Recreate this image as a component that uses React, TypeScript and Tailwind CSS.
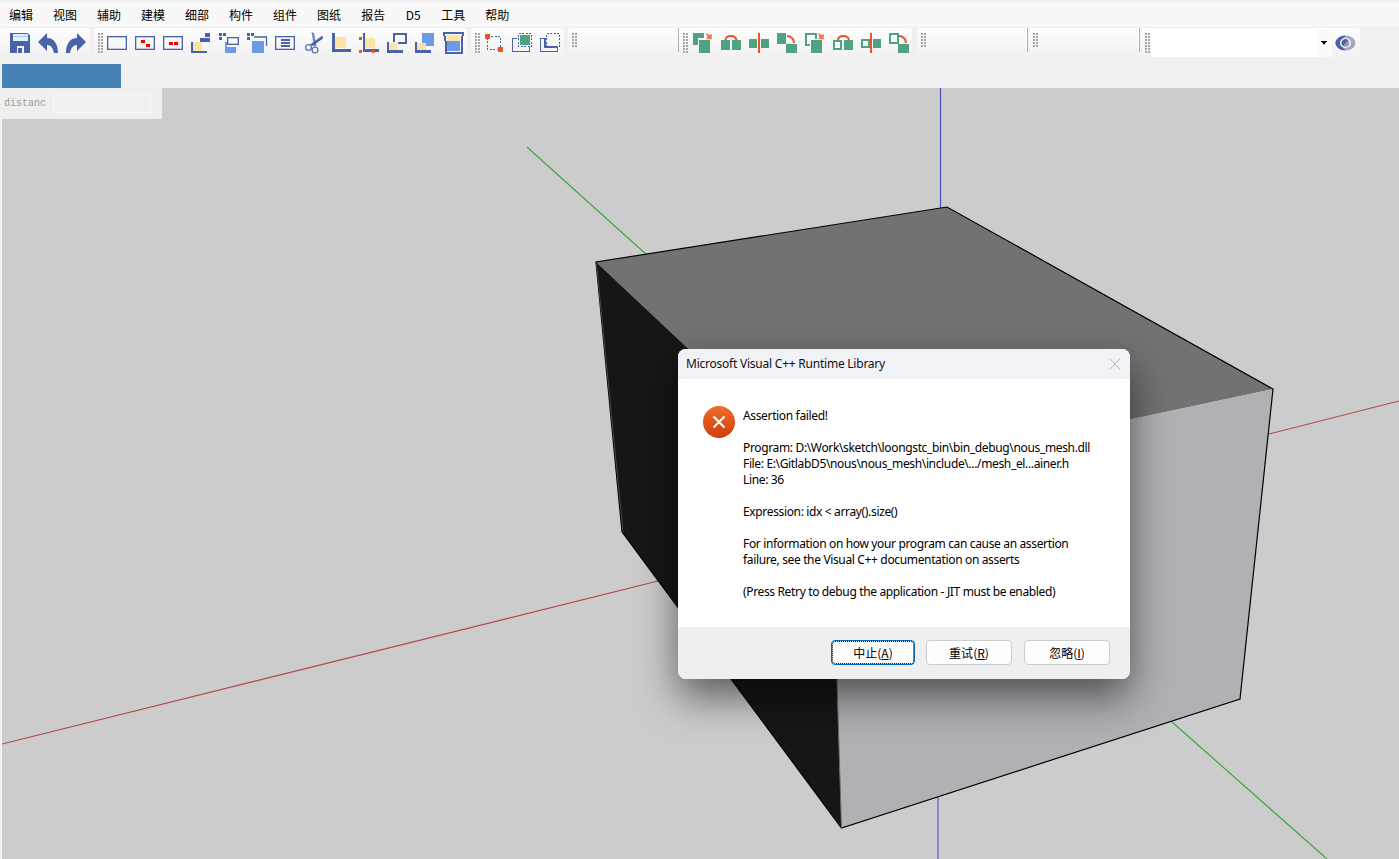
import React from "react";

const B = "#4a63a8";
const Y = "#fbe3a3";
const L = "#6a9ae8";
const R = "#f00000";
const O = "#e8552c";
const G = "#4fa383";

function Ico({ x, children }: { x: number; children?: React.ReactNode }) {
  return (
    <div className="flex h-[30px] w-[28px] shrink-0 items-center justify-center">
      <svg width="24" height="24" viewBox={`${x} 31 24 24`} shapeRendering="crispEdges">
        {children}
      </svg>
    </div>
  );
}

function Handle({ tall = true }: { tall?: boolean }) {
  const cls = tall
    ? "h-[20px] w-[2px] bg-[repeating-linear-gradient(to_bottom,#a6a6a6_0_2px,transparent_2px_3px)]"
    : "h-[14px] w-[2px] bg-[repeating-linear-gradient(to_bottom,#a6a6a6_0_2px,transparent_2px_3px)]";
  return (
    <div className="flex w-full gap-px pt-[5px]">
      <div className={cls} />
      <div className={cls} />
    </div>
  );
}

function Group({
  w,
  tall = true,
  handle = true,
  hw = 9,
  children,
  line = false,
}: {
  w: number;
  tall?: boolean;
  handle?: boolean;
  hw?: number;
  line?: boolean;
  children?: React.ReactNode;
}) {
  return (
    <div
      className="relative flex h-[30px] shrink-0 rounded-[2px] bg-gradient-to-b from-[#fdfdfd] to-[#f1f1f1]"
      style={{ width: w }}
    >
      {handle && (
        <div className="shrink-0 pl-[4px]" style={{ width: hw }}>
          <Handle tall={tall} />
        </div>
      )}
      {children}
      {line && <div className="absolute right-0 top-0 h-[24px] w-px bg-[#b4b4b4]" />}
    </div>
  );
}

const squares = (x: number) => (
  <>
    <rect x={x} y={33} width={3} height={3} fill={B} />
    <rect x={x + 3.5} y={33} width={3} height={3} fill={B} />
    <rect x={x} y={36.5} width={3} height={3} fill={B} />
  </>
);

function Frame({ x, y = 36, w = 20, h = 14 }: { x: number; y?: number; w?: number; h?: number }) {
  return (
    <rect
      x={x + 0.65}
      y={y + 0.65}
      width={w - 1.3}
      height={h - 1.3}
      fill="none"
      stroke={B}
      strokeWidth="1.3"
      shapeRendering="auto"
    />
  );
}

function Arc({ d }: { d: string }) {
  return <path d={d} fill="none" stroke={O} strokeWidth="2" shapeRendering="auto" />;
}

const Arrow = ({ x }: { x: number }) => (
  <path d={`M${x} 33l4 2 2-1-0.5 5.5-5.5-0.5 1.5-1.5z`} fill={O} opacity="0.8" shapeRendering="auto" />
);

function EyeIcon() {
  return (
    <svg width="24" height="20" viewBox="1334 33 24 20">
      <ellipse cx="1346.5" cy="43" rx="10" ry="7.5" fill="#a9a6c2" />
      <path d="M1346.5 35.5C1340 35.5 1336.5 40 1336.5 43C1336.5 46 1340 50.5 1346.5 50.5C1344 48 1342 45.5 1342 43C1342 40.5 1344 38 1346.5 35.5Z" fill={B} />
      <ellipse cx="1346.5" cy="43" rx="5.6" ry="5" fill="#f1f1f6" />
      <circle cx="1346.5" cy="43" r="3.8" fill="#9a9ab8" />
      <path d="M1349 40.2A3.8 3.8 0 0 0 1344 46Z" fill={B} />
    </svg>
  );
}

const MENU = ["编辑", "视图", "辅助", "建模", "细部", "构件", "组件", "图纸", "报告", "D5", "工具", "帮助"];

const TEXT = [
  "Assertion failed!",
  "",
  "Program: D:\\Work\\sketch\\loongstc_bin\\bin_debug\\nous_mesh.dll",
  "File: E:\\GitlabD5\\nous\\nous_mesh\\include\\.../mesh_el...ainer.h",
  "Line: 36",
  "",
  "Expression: idx < array().size()",
  "",
  "For information on how your program can cause an assertion",
  "failure, see the Visual C++ documentation on asserts",
  "",
  "(Press Retry to debug the application - JIT must be enabled)",
];

function DialogButton({ label, k, focus, cls = "" }: { label: string; k: string; focus?: boolean; cls?: string }) {
  return (
    <button
      className={
        (focus
          ? "flex h-[25px] w-[84px] items-center justify-center rounded-[4px] border border-[#0067c0] bg-[#fdfdfd] text-[12px] leading-none text-black outline-1 -outline-offset-2 outline-dotted outline-black "
          : "flex h-[25px] w-[86px] items-center justify-center rounded-[4px] border border-[#cdcdcd] bg-[#fdfdfd] text-[12px] leading-none text-black ") + cls
      }
      style={{ fontFamily: '"Noto Sans CJK SC", sans-serif' }}
    >
      {label}(<span className="underline">{k}</span>)
    </button>
  );
}

function Scene() {
  return (
    <svg className="absolute inset-0 h-full w-full" viewBox="2 88 1397 771">
      <g fill="none" strokeWidth="1.2">
        <path d="M940.5 88V250" stroke="#4e4ec0" />
        <path d="M938 797V859" stroke="#6c6cc8" strokeWidth="1.4" />
        <path d="M527 147L648 256" stroke="#3fa63f" />
        <path d="M1172 722L1327 859" stroke="#3fa63f" />
        <path d="M2 744L662 580" stroke="#b04848" />
        <path d="M1269 434L1399 401" stroke="#b04848" />
      </g>
      <polygon points="596,262 947,207 1273,389 831,483" fill="#727272" />
      <polygon points="596,262 831,483 841.5,828 622,532" fill="#161616" />
      <polygon points="831,483 1273,389 1240,699 841.5,828" fill="#b0b1b5" />
      <polyline
        points="622,532 596,262 947,207 1273,389 1240,699 841.5,828 622,532"
        fill="none"
        stroke="#000"
        strokeWidth="1.2"
      />
      <path d="M596.5 264L623 532" stroke="#555" strokeWidth="0.8" />
      <path d="M831 483L841.5 828" stroke="#6a6a6a" strokeWidth="1" />
    </svg>
  );
}

export default function App() {
  return (
    <div
      className="flex h-[859px] w-[1399px] flex-col overflow-hidden bg-[#f0f0f0]"
      style={{ fontFamily: '"Noto Sans CJK SC", sans-serif' }}
    >
      {/* menu bar */}
      <div className="mt-[2px] flex h-[25px] shrink-0 items-center gap-5 bg-[#f8f8f8] pl-[9px] text-[12px] text-black">
        {MENU.map((m) => (
          <span key={m} className={m === "D5" ? "w-4 text-center" : ""}>
            {m}
          </span>
        ))}
      </div>

      {/* toolbar */}
      <div className="mt-px flex h-[30px] shrink-0">
        <Group w={90} handle={false}>
          <div className="w-[6px]" />
          <Ico x={8}>
            <path d="M10 33H27L30 36V53H10Z" fill={B} />
            <rect x="12.5" y="33.5" width="15" height="7" fill="#e2effc" />
            <rect x="13" y="35.5" width="14" height="1" fill="#a8c8ec" />
            <rect x="16.5" y="46" width="7" height="7" fill="#f2f4fa" />
            <rect x="18" y="48" width="4" height="5" fill={B} />
          </Ico>
          <Ico x={36}>
            <path shapeRendering="auto" d="M38 42L47 33V38C54 38 58 44 58 53H54C53 48 51 45 47 45V51Z" fill={B} />
          </Ico>
          <Ico x={64}>
            <path shapeRendering="auto" d="M86 42L77 33V38C70 38 66 44 66 53H70C71 48 73 45 77 45V51Z" fill={B} />
          </Ico>
        </Group>
        <div className="w-[4px] shrink-0" />
        <Group w={373}>
          <Ico x={105}>
            <Frame x={107} />
          </Ico>
          <Ico x={133}>
            <Frame x={135} />
            <rect x="141" y="40" width="3.5" height="3" fill={R} />
            <rect x="146" y="44" width="3.5" height="3" fill={R} />
          </Ico>
          <Ico x={161}>
            <Frame x={163} />
            <rect x="169" y="42" width="3.5" height="3" fill={R} />
            <rect x="174" y="42" width="3.5" height="3" fill={R} />
          </Ico>
          <Ico x={189}>
            <rect x="193" y="42" width="9" height="9" fill={Y} />
            <path d="M191 42H193V51H207V53H191Z" fill={B} />
            <rect x="205" y="33" width="5" height="4" fill={B} />
            <rect x="200" y="38" width="4.5" height="4" fill={B} />
            <rect x="205" y="38" width="5" height="4" fill={B} />
          </Ico>
          <Ico x={217}>
            {squares(219)}
            <Frame x={227} y={37} w={12} h={8} />
            <path d="M224.5 42H226.5V46.5H236V53H224.5Z" fill={L} />
          </Ico>
          <Ico x={245}>
            {squares(247)}
            <path d="M254 37H266.5V46" fill="none" stroke={B} strokeWidth="1.3" shapeRendering="auto" />
            <rect x="252" y="41" width="12" height="12" fill={L} />
          </Ico>
          <Ico x={273}>
            <Frame x={275} />
            <rect x="281" y="39" width="9" height="1.7" fill={B} />
            <rect x="281" y="42" width="9" height="1.7" fill={B} />
            <rect x="281" y="45.3" width="9" height="1.7" fill={B} />
          </Ico>
          <Ico x={301}>
            <g shapeRendering="auto">
              <path d="M311.5 32L314 33L316.5 46L314 46.5Z" fill="#7288c4" />
              <path d="M322.5 35.5L323 38.5L312.5 46L310 44.5Z" fill={B} />
              <circle cx="308.5" cy="47.5" r="2.9" fill="none" stroke="#5c74b4" strokeWidth="1.3" />
              <circle cx="315" cy="50" r="2.9" fill="none" stroke="#5c74b4" strokeWidth="1.3" />
            </g>
          </Ico>
          <Ico x={329}>
            <rect x="335" y="37" width="11" height="11" fill={Y} />
            <path d="M332 33H335V49H351V52H332Z" fill={B} />
          </Ico>
          <Ico x={357}>
            <rect x="365" y="38" width="10" height="10" fill={Y} />
            <path d="M363 33H365V49H379V51.5H363Z" fill={B} />
            <rect x="359" y="37" width="3" height="3" fill={O} />
            <rect x="359" y="50" width="3" height="3" fill={O} />
            <rect x="372" y="50" width="3" height="3" fill={O} />
          </Ico>
          <Ico x={385}>
            <rect x="389" y="43" width="8" height="7" fill={Y} />
            <path d="M387 42H389V50H403V52.5H387Z" fill={B} />
            <path d="M394 42V34H406V43H398" fill="none" stroke={B} strokeWidth="1.4" />
          </Ico>
          <Ico x={413}>
            <rect x="422" y="33" width="12" height="13" fill={L} />
            <rect x="417" y="43" width="9" height="7" fill={Y} />
            <path d="M415 42H417V50H431V52.5H415Z" fill={B} />
          </Ico>
          <Ico x={441}>
            <path d="M446 35H461L459.5 41H447.5Z" fill={Y} />
            <path d="M447 41H460V50.5H447Z" fill={L} />
            <path d="M444 33H463L461.5 41V52.5H445.5V41Z" fill="none" stroke={B} strokeWidth="2" />
          </Ico>
        </Group>
        <div className="w-[4px] shrink-0" />
        <Group w={93}>
          <Ico x={482}>
            <rect x="487.5" y="36.5" width="13" height="13" fill="none" stroke={B} strokeWidth="1" strokeDasharray="2 1.5" />
            <rect x="485" y="34" width="5" height="5" fill={O} />
            <rect x="498" y="47" width="5" height="5" fill={O} />
          </Ico>
          <Ico x={510}>
            <path d="M517 38.5H512.7V51.3H529.3V47" fill="none" stroke={B} strokeWidth="1.4" />
            <rect x="518.5" y="33.5" width="13" height="13" fill="none" stroke={B} strokeWidth="1" strokeDasharray="2 1.5" />
            <rect x="520" y="35" width="10" height="10" fill={G} />
          </Ico>
          <Ico x={538}>
            <path d="M545 38.5H540.7V51.3H557.3V47H545Z" fill="none" stroke={B} strokeWidth="1.4" />
            <rect x="546.5" y="33.5" width="13" height="13" fill="none" stroke={B} strokeWidth="1" strokeDasharray="2 1.5" />
          </Ico>
        </Group>
        <div className="w-[4px] shrink-0" />
        <Group w={111} tall={false} line />
        <Group w={233}>
          <Ico x={690}>
            <rect x="693" y="33" width="11" height="12" fill={G} />
            <rect x="698" y="38" width="13" height="16" fill="#f8f8f8" />
            <rect x="699" y="39.5" width="11" height="13.5" fill={G} />
            <Arrow x={706} />
          </Ico>
          <Ico x={718}>
            <rect x="721" y="40" width="9" height="10" fill={G} />
            <rect x="732" y="40" width="9" height="10" fill={G} />
            <Arc d="M725.5 40C726 34.5 735.5 34.5 736.5 40" />
          </Ico>
          <Ico x={746}>
            <rect x="749" y="39" width="8" height="9" fill={G} />
            <rect x="761" y="39" width="8" height="9" fill={G} />
            <rect x="758" y="33" width="2" height="20" fill={O} />
          </Ico>
          <Ico x={774}>
            <rect x="777" y="33" width="9" height="11" fill={G} />
            <rect x="786" y="44" width="11" height="9" fill={G} />
            <Arc d="M787 36C791 36 794 39 794 43" />
          </Ico>
          <Ico x={802}>
            <rect x="806" y="34" width="9.5" height="10.5" fill="none" stroke={G} strokeWidth="2" />
            <rect x="810" y="38.5" width="13" height="16" fill="#f8f8f8" />
            <rect x="811" y="40" width="11" height="13" fill={G} />
            <Arrow x={818} />
          </Ico>
          <Ico x={830}>
            <rect x="834" y="41" width="6.5" height="8" fill="#fff" stroke={G} strokeWidth="2" />
            <rect x="844" y="40" width="9" height="10" fill={G} />
            <Arc d="M838 40C838.5 34.5 848 34.5 849 40" />
          </Ico>
          <Ico x={858}>
            <rect x="862" y="40" width="6.5" height="7" fill="#fff" stroke={G} strokeWidth="2" />
            <rect x="873" y="39" width="8" height="9" fill={G} />
            <rect x="870" y="33" width="2" height="20" fill={O} />
          </Ico>
          <Ico x={886}>
            <rect x="890" y="34" width="7.5" height="9" fill="#fff" stroke={G} strokeWidth="2" />
            <rect x="898" y="44" width="11" height="9" fill={G} />
            <Arc d="M899 36C903 36 906 39 906 43" />
          </Ico>
        </Group>
        <div className="w-[5px] shrink-0" />
        <Group w={111} tall={false} line />
        <div className="w-px shrink-0" />
        <Group w={111} tall={false} line />
        <div className="w-px shrink-0" />
        <Group w={219} hw={10}>
          <div className="mt-px flex h-[28px] w-[180px] shrink-0 justify-end bg-white pr-px">
            <div className="flex h-full w-[12px] items-center justify-center bg-[#f9f9f9]">
              <svg width="6" height="4" viewBox="0 0 6 4">
                <path d="M0 0H6V1H5L3 4L1 1H0Z" fill="#000" />
              </svg>
            </div>
          </div>
          <div className="flex h-[30px] w-[28px] shrink-0 items-center justify-center">
            <EyeIcon />
          </div>
        </Group>
      </div>

      {/* tool panel strip */}
      <div className="mt-[6px] flex h-[24px] shrink-0 pl-[2px]">
        <div className="h-[24px] w-[119px] bg-[#4682b4]" />
      </div>

      {/* viewport */}
      <div className="flex min-h-0 flex-1">
        <div className="w-[2px] shrink-0 bg-[#f0f0f0]" />
        <div className="relative flex-1 overflow-hidden bg-[#cccccc]">
          <Scene />

          <div className="absolute left-0 top-0 flex h-[31px] w-[160px] items-center bg-[#efefef] pl-[2px]">
            <span
              className="w-[49px] text-[10px] text-[#9c9c9c]"
              style={{ fontFamily: '"Liberation Mono", monospace' }}
            >
              distanc
            </span>
            <div className="h-[19px] w-[98px] border border-[#f8f8f8] bg-[#f0f0f0]" />
          </div>

          {/* dialog */}
          <div
            className="absolute left-[676px] top-[261px] flex h-[330px] w-[452px] flex-col overflow-hidden rounded-[8px] bg-white shadow-[0_18px_40px_rgba(0,0,0,0.55)]"
            style={{ fontFamily: '"Noto Sans", sans-serif' }}
          >
            <div className="flex h-[30px] shrink-0 items-center justify-between bg-[#f0f2f6] pl-[8px] pr-[10px] text-[12px] tracking-[-0.23px] text-[#111]">
              <span>Microsoft Visual C++ Runtime Library</span>
              <svg width="10" height="10" viewBox="0 0 10 10">
                <path d="M0 0L10 10M10 0L0 10" stroke="#b8b8bc" strokeWidth="1" />
              </svg>
            </div>
            <div className="flex flex-1 bg-white pl-[25px] pt-[29px]">
              <svg width="32" height="32" viewBox="0 0 32 32" className="mt-[-2px] shrink-0">
                <defs>
                  <linearGradient id="er" x1="0" y1="0" x2="0" y2="1">
                    <stop offset="0" stopColor="#ee6d2b" />
                    <stop offset="1" stopColor="#d03e06" />
                  </linearGradient>
                </defs>
                <circle cx="16" cy="16" r="16" fill="url(#er)" />
                <path d="M10.5 10.5L21.5 21.5M21.5 10.5L10.5 21.5" stroke="#fff" strokeWidth="2" />
              </svg>
              <div className="ml-[8px] text-[12px] leading-[16px] tracking-[-0.35px] text-black">
                {TEXT.map((t, i) => (
                  <div key={i} className="h-[16px] whitespace-pre">
                    {t}
                  </div>
                ))}
              </div>
            </div>
            <div className="flex h-[52px] shrink-0 items-start justify-end gap-[11px] bg-[#efefef] pr-[20px] pt-[13px]">
              <DialogButton label="中止" k="A" focus />
              <DialogButton label="重试" k="R" />
              <DialogButton label="忽略" k="I" cls="ml-px" />
            </div>
          </div>
        </div>
      </div>
    </div>
  );
}
